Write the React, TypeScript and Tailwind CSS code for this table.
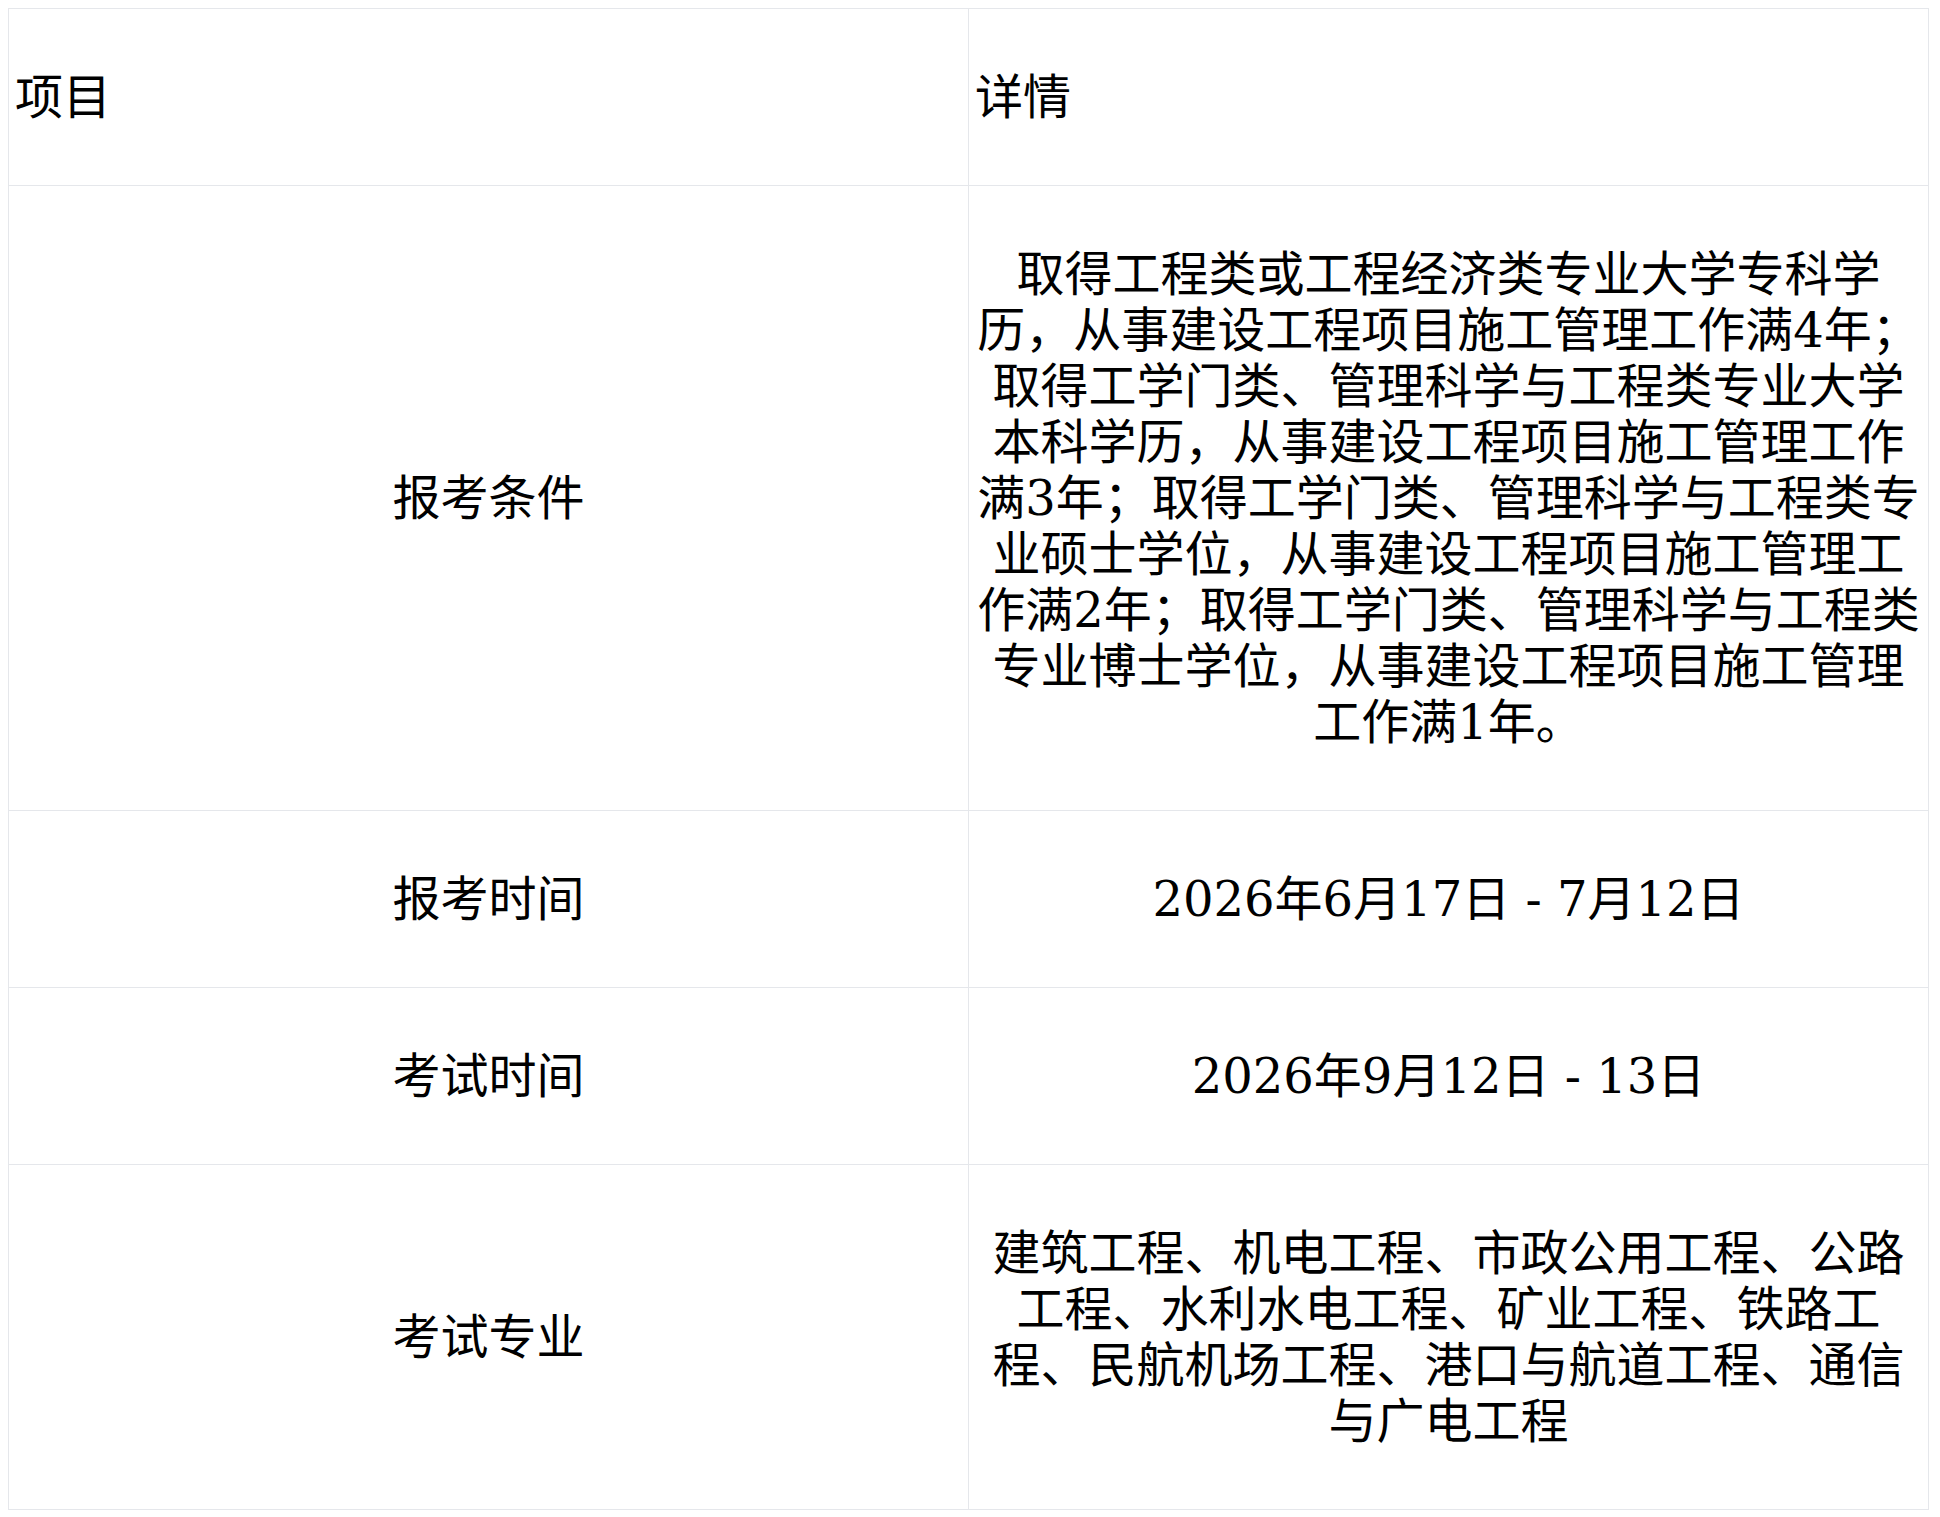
import React from 'react'

interface Row {
  label: string
  detail: string
}

const rows: Row[] = [
  {
    label: '报考条件',
    detail:
      '取得工程类或工程经济类专业大学专科学历，从事建设工程项目施工管理工作满4年；取得工学门类、管理科学与工程类专业大学本科学历，从事建设工程项目施工管理工作满3年；取得工学门类、管理科学与工程类专业硕士学位，从事建设工程项目施工管理工作满2年；取得工学门类、管理科学与工程类专业博士学位，从事建设工程项目施工管理工作满1年。'
  },
  { label: '报考时间', detail: '2026年6月17日 - 7月12日' },
  { label: '考试时间', detail: '2026年9月12日 - 13日' },
  {
    label: '考试专业',
    detail:
      '建筑工程、机电工程、市政公用工程、公路工程、水利水电工程、矿业工程、铁路工程、民航机场工程、港口与航道工程、通信与广电工程'
  }
]

const cellBase = 'border border-[#e5e7eb] px-[6px] py-[60px] w-1/2 align-middle'

const App: React.FC = () => {
  return (
    <div className="bg-white min-h-screen p-2 text-black font-['DejaVu_Serif','Noto_Sans_CJK_SC',serif] text-[48px] leading-[56px]">
      <table className="w-[1921px] border-collapse table-fixed">
        <thead>
          <tr>
            <th className={`${cellBase} text-left font-normal`}>项目</th>
            <th className={`${cellBase} text-left font-normal`}>详情</th>
          </tr>
        </thead>
        <tbody>
          {rows.map((row) => (
            <tr key={row.label}>
              <td className={`${cellBase} text-center`}>{row.label}</td>
              <td className={`${cellBase} text-center`}>{row.detail}</td>
            </tr>
          ))}
        </tbody>
      </table>
    </div>
  )
}

export default App
